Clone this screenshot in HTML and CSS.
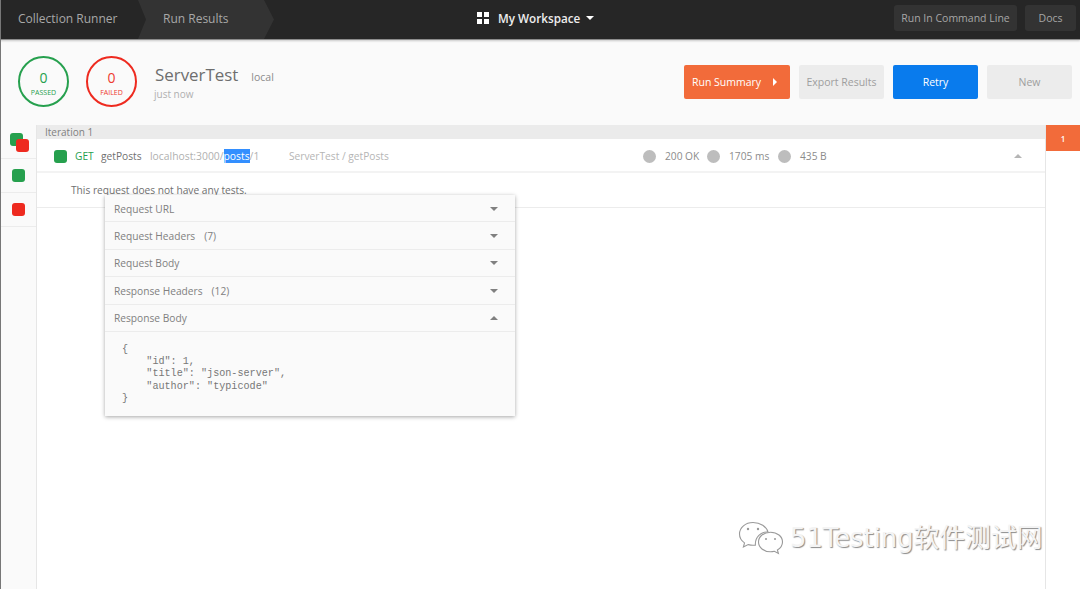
FILE: index.html
```html
<!DOCTYPE html>
<html lang="en">
<head>
<meta charset="utf-8">
<title>Run Results</title>
<link rel="stylesheet" href="styles.css">
</head>
<body>
<div class="app">
  <header class="topbar">
    <div class="crumbs">
      <div class="crumb crumb-first">Collection Runner</div>
      <div class="crumb crumb-second">Run Results</div>
    </div>
    <div class="workspace">
      <svg class="ws-icon" width="12" height="12" viewBox="0 0 12 12"><rect width="5" height="5" fill="#fff"/><rect x="7" width="5" height="5" fill="#fff"/><rect y="7" width="5" height="5" fill="#fff"/><rect x="7" y="7" width="5" height="5" fill="#fff"/></svg>
      <span class="ws-name">My Workspace</span>
      <span class="ws-caret"></span>
    </div>
    <div class="top-actions">
      <div class="top-btn top-btn-cli">Run In Command Line</div>
      <div class="top-btn top-btn-docs">Docs</div>
    </div>
  </header>

  <section class="summary">
    <div class="ring ring-pass"><span class="ring-num">0</span><span class="ring-label">PASSED</span></div>
    <div class="ring ring-fail"><span class="ring-num">0</span><span class="ring-label">FAILED</span></div>
    <div class="run-info">
      <div class="run-title"><span class="run-name">ServerTest</span><span class="run-env">local</span></div>
      <div class="run-time">just now</div>
    </div>
    <div class="actions">
      <div class="btn btn-orange">Run Summary<span class="btn-arrow"></span></div>
      <div class="btn btn-grey btn-export">Export Results</div>
      <div class="btn btn-blue">Retry</div>
      <div class="btn btn-grey btn-new">New</div>
    </div>
  </section>

  <main class="results">
    <nav class="filters">
      <div class="filter filter-both"><span class="sq sq-green sq-back"></span><span class="sq sq-red sq-front"></span></div>
      <div class="filter"><span class="sq sq-green"></span></div>
      <div class="filter"><span class="sq sq-red"></span></div>
    </nav>
    <div class="content">
      <div class="iteration">Iteration 1</div>
      <div class="req-row">
        <span class="sq sq-green"></span>
        <span class="method">GET</span>
        <span class="req-name">getPosts</span>
        <span class="req-url">localhost:3000/<mark class="sel">posts</mark>/1</span>
        <span class="req-path">ServerTest / getPosts</span>
        <div class="stats">
          <span class="dot"></span><span class="stat stat-status">200 OK</span>
          <span class="dot"></span><span class="stat stat-time">1705 ms</span>
          <span class="dot"></span><span class="stat">435 B</span>
        </div>
        <span class="tri tri-up tri-light"></span>
      </div>
      <div class="no-tests">This request does not have any tests.</div>
    </div>
    <aside class="iter-rail"><div class="iter-tab">1</div></aside>
  </main>

  <div class="popup">
    <div class="acc-row"><span>Request URL</span><span class="tri tri-down"></span></div>
    <div class="acc-row"><span>Request Headers<span class="count">(7)</span></span><span class="tri tri-down"></span></div>
    <div class="acc-row"><span>Request Body</span><span class="tri tri-down"></span></div>
    <div class="acc-row"><span>Response Headers<span class="count">(12)</span></span><span class="tri tri-down"></span></div>
    <div class="acc-row"><span>Response Body</span><span class="tri tri-up"></span></div>
    <pre class="body-code">{
    "id": 1,
    "title": "json-server",
    "author": "typicode"
}</pre>
  </div>

  <div class="watermark">
    <svg class="wm-icon" width="46" height="34" viewBox="0 0 46 34" fill="#fff" stroke="#9a9a9a" stroke-width="1.1">
      <path d="M15 1.5C7.5 1.5 1.5 6.6 1.5 13c0 3.6 2 6.8 5 8.9L5.4 26l4.8-2.4c1.6.4 3 .7 4.8.7 1 0 1.700-.1 2.400-.2C16.800 16 23 10.500 30 11 28.500 5.500 22.500 1.500 15 1.500z"/>
      <path d="M44.500 21c0-5.500-5.300-9.800-12-9.800s-12 4.300-12 9.800 5.300 9.800 12 9.800c1.400 0 2.700-.2 3.900-.5l4 2.200-1-3.500c3-1.800 5.100-4.700 5.100-8z"/>
      <circle cx="10" cy="8" r="1.200" fill="#999" stroke="none"/><circle cx="20" cy="8" r="1.200" fill="#999" stroke="none"/>
      <circle cx="28" cy="18" r="1" fill="#999" stroke="none"/><circle cx="37" cy="18" r="1" fill="#999" stroke="none"/>
    </svg>
    <span class="wm-text">51Testing软件测试网</span>
  </div>
</div>
</body>
</html>
```
FILE: styles.css
```css
* { box-sizing: border-box; }
html, body { margin: 0; padding: 0; height: 100%; overflow: hidden; }
body { font-family: "Open Sans", "Noto Sans", sans-serif; background: #fff; color: #808080; }
.app { position: relative; width: 1080px; height: 589px; display: flex; flex-direction: column; border-left: 1px solid #777; overflow: hidden; }

.topbar { height: 40px; flex: none; background: #262626; display: flex; align-items: center; position: relative; border-bottom: 1px solid #8c8c8c; box-shadow: 0 1px 2px rgba(0,0,0,.2); z-index: 2; margin-left: -1px; }
.crumbs { display: flex; height: 39px; width: 280px; flex: none; }
.crumb { font-size: 12px; color: #a8a8a8; line-height: 38px; }
.crumb-first { width: 138px; padding-left: 18px; flex: none; }
.crumb-second { width: 137px; padding-left: 25px; flex: none; background: #333; clip-path: polygon(0 0, 126px 0, 136px 50%, 126px 100%, 0 100%, 8px 50%); }
.workspace { display: flex; align-items: center; margin-left: 197px; margin-bottom: 3px; width: 417px; flex: none; }
.ws-icon { flex: none; }
.ws-name { font-size: 11.700px; font-weight: 600; color: #eee; margin-left: 9px; }
.ws-caret { margin-left: 6px; width: 0; height: 0; border: 4px solid transparent; border-top: 4px solid #fff; border-bottom: 0; }
.top-actions { display: flex; gap: 8px; margin-bottom: 3px; }
.top-btn { height: 26px; background: #333; border-radius: 3px; font-size: 10.500px; line-height: 26px; color: #a6a6a6; text-align: center; }
.top-btn-cli { width: 123px; }
.top-btn-docs { width: 51px; }

.summary { height: 85px; flex: none; background: #fafafa; display: flex; align-items: flex-start; padding: 16px 0 0 17px; }
.ring { width: 51px; height: 51px; border-radius: 50%; border: 2px solid; display: flex; flex-direction: column; align-items: center; flex: none; }
.ring-pass { border-color: #26a04e; color: #26a04e; }
.ring-fail { border-color: #ee2a1f; color: #ee3a30; margin-left: 17px; }
.ring-num { font-size: 14px; line-height: 18px; margin-top: 11px; }
.ring-label { font-size: 7px; line-height: 10px; margin-top: 1px; }
.run-info { margin-left: 18px; width: 529px; flex: none; }
.run-title { display: flex; align-items: baseline; height: 24px; margin-top: 7px; }
.run-name { font-size: 16.900px; color: #6e6e6e; line-height: 24px; }
.run-env { font-size: 10.500px; color: #8c8c8c; margin-left: 13px; }
.run-time { font-size: 10px; color: #b0b0b0; line-height: 14px; margin-left: -1px; }
.actions { display: flex; gap: 9px; margin-top: 9px; }
.btn { height: 34px; border-radius: 2px; font-size: 10.500px; line-height: 35px; text-align: center; flex: none; }
.btn-orange { width: 106px; background: #f26b3a; color: #fff; display: flex; align-items: center; padding-left: 8px; }
.btn-arrow { margin-left: 12px; width: 0; height: 0; border: 4px solid transparent; border-left: 4px solid #fff; border-right: 0; }
.btn-grey { background: #ececec; color: #9e9e9e; }
.btn-export { width: 85px; }
.btn-blue { width: 85px; background: #097bed; color: #fff; }
.btn-new { width: 85px; }

.results { flex: 1; display: flex; min-height: 0; }
.filters { width: 36px; flex: none; background: #fafafa; border-right: 1px solid #e6e6e6; }
.filter { height: 34px; border-bottom: 1px solid #ececec; display: flex; align-items: center; justify-content: center; position: relative; }
.sq { display: block; width: 13px; height: 13px; border-radius: 3px; flex: none; }
.sq-green { background: #26a04e; }
.sq-red { background: #ee2a1f; }
.sq-back { position: absolute; left: 9px; top: 8px; }
.sq-front { position: absolute; left: 15px; top: 14px; }

.content { flex: 1; min-width: 0; }
.iteration { height: 14px; background: #ebebeb; font-size: 10px; line-height: 15px; color: #808080; padding-left: 8px; }
.req-row { height: 34px; display: flex; align-items: center; padding: 2px 0 0 17px; border-bottom: 2px solid #f3f3f3; font-size: 10.200px; }
.method { color: #26a04e; margin-left: 8px; width: 26px; flex: none; }
.req-name { color: #707070; width: 49px; flex: none; }
.req-url { color: #b0b0b0; width: 139px; flex: none; font-size: 10.350px; }
.sel { background: #338fff; color: #fff; }
.req-path { color: #b5b5b5; width: 354px; flex: none; }
.stats { display: flex; align-items: center; color: #8c8c8c; width: 371px; flex: none; }
.dot { width: 13px; height: 13px; border-radius: 50%; background: #bdbdbd; flex: none; }
.stat { margin-left: 9px; }
.stat-status { width: 42px; flex: none; }
.stat-time { width: 49px; flex: none; }
.tri { display: block; width: 0; height: 0; border-left: 4px solid transparent; border-right: 4px solid transparent; flex: none; }
.tri-down { border-top: 4px solid #808080; }
.tri-up { border-bottom: 4px solid #808080; }
.tri-light { border-bottom-color: #b5b5b5; }
.no-tests { height: 35px; border-bottom: 1px solid #ececec; font-size: 10.200px; color: #707070; padding: 10px 0 0 34px; line-height: 14px; }

.iter-rail { width: 35px; flex: none; border-left: 1px solid #e6e6e6; }
.iter-tab { height: 26px; background: #f26b3a; color: #fff; font-size: 8px; font-weight: 600; line-height: 27px; text-align: center; }

.popup { position: absolute; left: 104px; top: 195px; width: 410px; height: 221px; background: #fafafa; box-shadow: 0 1px 4px rgba(0,0,0,.35); z-index: 3; }
.acc-row { height: 27.400px; display: flex; justify-content: space-between; align-items: center; padding: 1px 17px 0 9px; border-bottom: 1px solid #ececec; font-size: 10.200px; color: #808080; }
.count { margin-left: 9px; }
.body-code { margin: 12px 0 0 17px; font-family: "Liberation Mono", monospace; font-size: 10.150px; line-height: 12.200px; color: #777; }

.watermark { position: absolute; left: 737px; top: 521px; display: flex; align-items: center; z-index: 4; }
.wm-icon { flex: none; }
.wm-text { margin-left: 6px; font-family: "DejaVu Sans", "Noto Sans CJK SC", sans-serif; font-size: 25.800px; line-height: 34px; color: #f4f4f4; text-shadow: 1px 1px 1px #8a8a8a; white-space: nowrap; }
```
